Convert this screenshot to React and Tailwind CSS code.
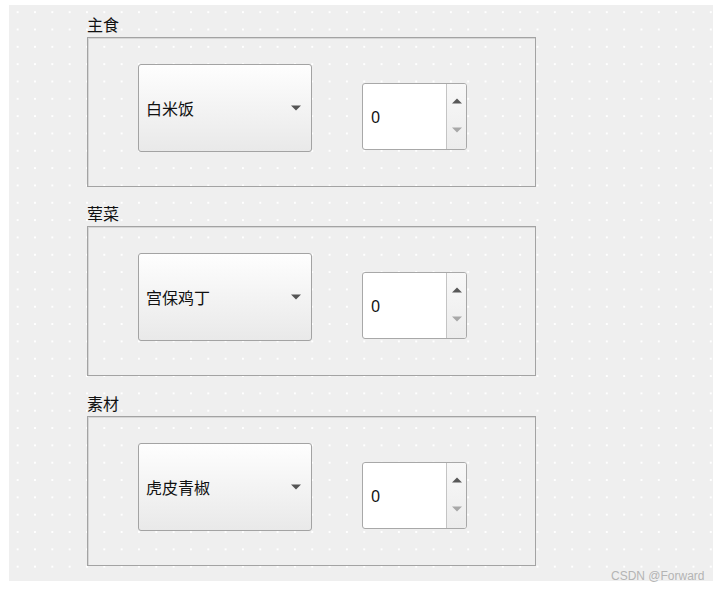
import React from "react";

const cjk = { fontFamily: '"Noto Sans CJK SC", "Noto Sans", sans-serif' };

function Arrow({ dir = "down", color = "#505050" }) {
  return (
    <svg width="10" height="6" viewBox="0 0 10 6" className="block">
      {dir === "down" ? (
        <polygon points="0,0.5 10,0.5 5,5.5" fill={color} />
      ) : (
        <polygon points="0,5.5 10,5.5 5,0.5" fill={color} />
      )}
    </svg>
  );
}

function Group({ title, item, gapTop }) {
  return (
    <div className={gapTop}>
      <div className="h-[21px] leading-[16px] text-[16px] text-[#111]" style={cjk}>
        {title}
      </div>
      <div className="w-[449px] h-[150px] border border-[#a3a3a3] shadow-[inset_1px_1px_0_#d6d6d6] pl-[50px] pt-[26px] flex items-start">
        <div className="w-[174px] h-[88px] rounded-[3px] border border-[#a3a3a3] bg-gradient-to-b from-[#fefefe] to-[#e9e9e9] flex items-center pl-[7px] pr-[10px]">
          <span className="flex-1 text-[16px] text-[#111]" style={cjk}>
            {item}
          </span>
          <Arrow dir="down" color="#555555" />
        </div>
        <div className="ml-[50px] mt-[19px] w-[105px] h-[67px] rounded-[3px] border border-[#a8a8a8] bg-white flex overflow-hidden">
          <div
            className="flex-1 flex items-center pl-[8px] text-[16px] text-[#111]"
            style={{ fontFamily: '"Noto Sans", "Liberation Sans", sans-serif' }}
          >
            0
          </div>
          <div className="w-[20px] border-l border-[#c4c4c4] bg-gradient-to-b from-[#f8f8f8] to-[#ececec] flex flex-col items-center justify-between pt-[14px] pb-[16px]">
            <Arrow dir="up" color="#585858" />
            <Arrow dir="down" color="#a8a8a8" />
          </div>
        </div>
      </div>
    </div>
  );
}

export default function App() {
  return (
    <div className="relative w-[719px] h-[589px] bg-white overflow-hidden">
      <div className="ml-[9px] mt-[5px] w-[704px] h-[576px] bg-[#efefef] bg-[radial-gradient(circle_at_center,#ffffff_0.9px,transparent_1.1px)] bg-[size:17.33px_17.33px] bg-[position:0px_-1.5px] pl-[78px] pt-[11px]">
        <Group title="主食" item="白米饭" gapTop="" />
        <Group title="荤菜" item="宫保鸡丁" gapTop="mt-[18px]" />
        <Group title="素材" item="虎皮青椒" gapTop="mt-[19px]" />
      </div>
      <div
        className="absolute left-[611px] top-[568px] text-[12px] leading-[16px] text-[#b4b4b4]"
        style={{ fontFamily: '"Liberation Sans", Arial, sans-serif' }}
      >
        CSDN @Forward
      </div>
    </div>
  );
}
